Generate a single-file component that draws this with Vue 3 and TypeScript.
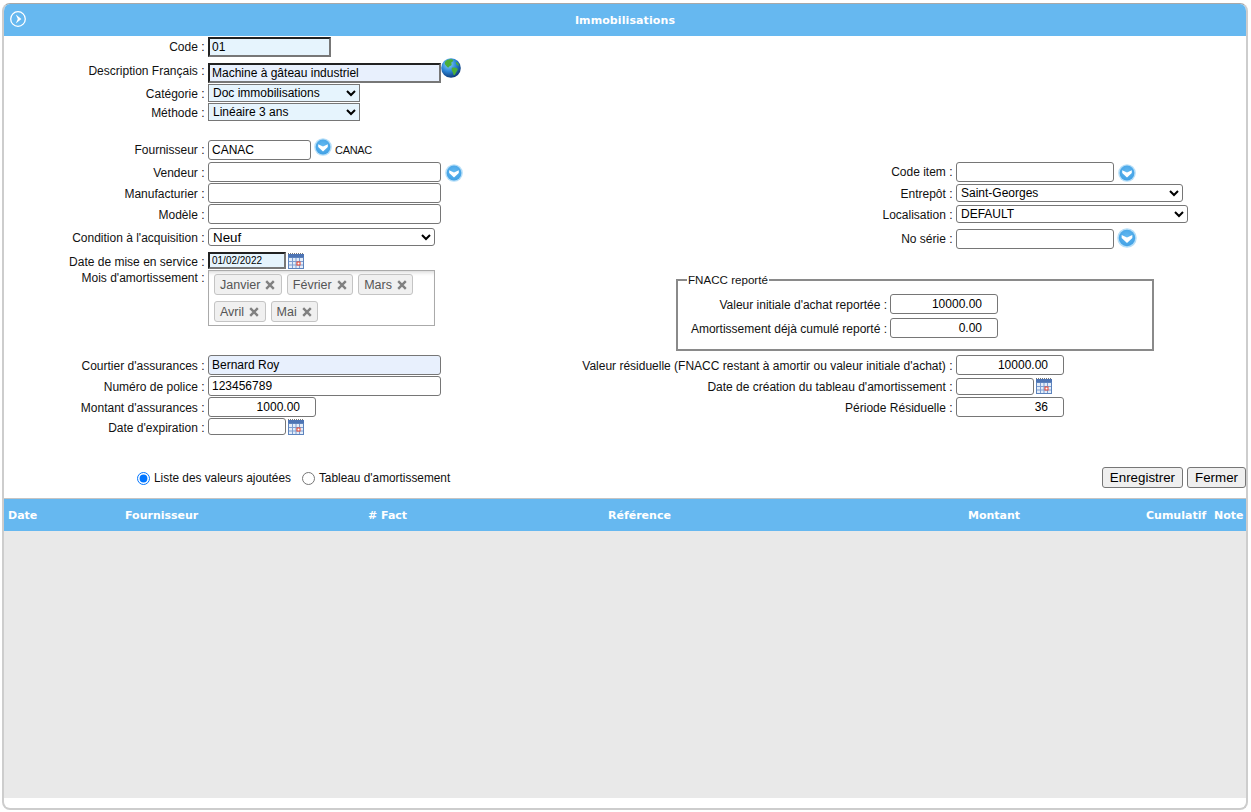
<script setup lang="ts">
const months: string[] = ['Janvier', 'Février', 'Mars', 'Avril', 'Mai']
const columns: string[] = ['Date', 'Fournisseur', '# Fact', 'Référence', 'Montant', 'Cumulatif', 'Note']
</script>

<template>
  <div class="page">
    <svg class="defs" width="0" height="0" aria-hidden="true">
      <defs>
        <radialGradient id="gb" cx="50%" cy="40%" r="65%">
          <stop offset="0" stop-color="#62b8f0" />
          <stop offset="1" stop-color="#3f9fe4" />
        </radialGradient>
        <radialGradient id="gg" cx="38%" cy="30%" r="75%">
          <stop offset="0" stop-color="#8fd4f8" />
          <stop offset="0.5" stop-color="#2c86d8" />
          <stop offset="1" stop-color="#0b3470" />
        </radialGradient>
        <symbol id="drop" viewBox="0 0 18 18">
          <circle cx="9" cy="9" r="8.8" fill="#b5def8" />
          <circle cx="9" cy="9" r="7.4" fill="url(#gb)" />
          <path d="M4.200 6.300 9 8.600l4.800-2.300v2.600L9 13.400 4.200 8.900z" fill="#fff" />
        </symbol>
        <symbol id="cal" viewBox="0 0 16 16">
          <rect x="0" y="1" width="16" height="15" fill="#5d83bd" />
          <path d="M0 .5h16" stroke="#777" stroke-dasharray="1 1" />
          <rect x="0" y="1" width="16" height="3" fill="#4d74b4" />
          <rect x="1" y="5" width="14" height="10" fill="#e4edf9" />
          <path d="M4.500 5v10M8 5v10M11.500 5v10M1 8.500h14M1 12h14" stroke="#7d9fd2" />
          <rect x="9" y="9" width="3" height="3" fill="#fff" stroke="#e8402a" />
        </symbol>
      </defs>
    </svg>

    <div class="frame">
      <header class="title">
        <svg class="title-icon" width="18" height="18" viewBox="0 0 18 18">
          <circle cx="9" cy="9" r="7.300" fill="none" stroke="#fff" stroke-width="1.300" />
          <path d="M6.800 4.600 12.400 9l-5.600 4.400L8.800 9z" fill="#fff" />
        </svg>
        <span>Immobilisations</span>
      </header>

      <div class="form">
        <div class="col left">
          <div class="row r-code">
            <label class="flat">Code :</label>
            <input class="inset tint w123" value="01" />
          </div>
          <div class="row r-desc">
            <label class="up">Description Français :</label>
            <div class="ctl">
              <input class="inset tint2 w233" value="Machine à gâteau industriel" />
              <svg class="globe" width="20" height="20" viewBox="0 0 20 20">
                <circle cx="10" cy="10" r="9.800" fill="url(#gg)" />
                <path d="M4.500 3.200C6.800 1.300 10 .9 12 1.700c.8 1-.4 2-1.500 2.500-.5 1.100.7 1.800-.1 3-.9 1.200-2.300.6-2.600 2-.5 1-1.800-.3-2.500-1.300C3.500 6.500 3.400 4.700 4.500 3.200zM11 9.800c1.800-.7 4-.4 5.400.7.700 1.100-.2 2.600-1.200 3.700-.6 1.400-1.200 2.800-2.300 3-.8-.9-.7-2.300-1.400-3.400-.7-1.200-1.200-2.900-.5-4zM15 3.800c1.300.6 2.600 2 3.200 3.700-1 .4-2.200-.3-2.800-1.200-.5-.8-.8-1.700-.4-2.500z" fill="#4cae38" />
              </svg>
            </div>
          </div>
          <div class="row r-cat">
            <label>Catégorie :</label>
            <select class="sel tint w152"><option>Doc immobilisations</option></select>
          </div>
          <div class="row r-cat">
            <label>Méthode :</label>
            <select class="sel tint w152"><option>Linéaire 3 ans</option></select>
          </div>

          <div class="row r-four">
            <label class="flat">Fournisseur :</label>
            <div class="ctl">
              <input class="plain w103" value="CANAC" />
              <svg class="drop four-drop"><use href="#drop" /></svg>
              <span class="supplier">CANAC</span>
            </div>
          </div>
          <div class="row r-vend">
            <label>Vendeur :</label>
            <div class="ctl">
              <input class="plain w233" />
              <svg class="drop vend-drop"><use href="#drop" /></svg>
            </div>
          </div>
          <div class="row r-one">
            <label>Manufacturier :</label>
            <input class="plain w233" />
          </div>
          <div class="row r-one">
            <label>Modèle :</label>
            <input class="plain w233" />
          </div>
          <div class="row r-cond">
            <label>Condition à l'acquisition :</label>
            <select class="sel round big w227"><option>Neuf</option></select>
          </div>
          <div class="row r-date">
            <label>Date de mise en service :</label>
            <div class="ctl">
              <input class="inset tint small w78" value="01/02/2022" />
              <svg class="cal"><use href="#cal" /></svg>
            </div>
          </div>
          <div class="row r-mois">
            <label class="top">Mois d'amortissement :</label>
            <div class="chips">
              <span v-for="m in months" :key="m" class="chip">
                {{ m }}
                <svg class="x" width="10" height="10" viewBox="0 0 10 10">
                  <path d="M1.200 1.200l7.600 7.600M8.800 1.200 1.200 8.800" stroke="#808080" stroke-width="2.400" />
                </svg>
              </span>
            </div>
          </div>

          <div class="row r-court">
            <label>Courtier d'assurances :</label>
            <input class="plain tint2 w233" value="Bernard Roy" />
          </div>
          <div class="row r-one">
            <label>Numéro de police :</label>
            <input class="plain w233" value="123456789" />
          </div>
          <div class="row r-one">
            <label>Montant d'assurances :</label>
            <input class="plain num w108" value="1000.00" />
          </div>
          <div class="row r-exp">
            <label>Date d'expiration :</label>
            <div class="ctl">
              <input class="plain short w78" />
              <svg class="cal"><use href="#cal" /></svg>
            </div>
          </div>
        </div>

        <div class="col right">
          <div class="row wide r-item">
            <label class="flat">Code item :</label>
            <div class="ctl">
              <input class="plain w158" />
              <svg class="drop item-drop"><use href="#drop" /></svg>
            </div>
          </div>
          <div class="row wide r-ent">
            <label>Entrepôt :</label>
            <select class="sel round w227"><option>Saint-Georges</option></select>
          </div>
          <div class="row wide r-loc">
            <label>Localisation :</label>
            <select class="sel round w232"><option>DEFAULT</option></select>
          </div>
          <div class="row wide r-serie">
            <label class="flat">No série :</label>
            <div class="ctl">
              <input class="plain w158" />
              <svg class="drop serie-drop"><use href="#drop" /></svg>
            </div>
          </div>

          <fieldset class="fnacc">
            <legend>FNACC reporté</legend>
            <div class="f-row">
              <label>Valeur initiale d'achat reportée :</label>
              <input class="plain num w108" value="10000.00" />
            </div>
            <div class="f-row f-second">
              <label>Amortissement déjà cumulé reporté :</label>
              <input class="plain num w108" value="0.00" />
            </div>
          </fieldset>

          <div class="row wide r-res">
            <label>Valeur résiduelle (FNACC restant à amortir ou valeur initiale d'achat) :</label>
            <input class="plain num w108" value="10000.00" />
          </div>
          <div class="row wide r-crea">
            <label>Date de création du tableau d'amortissement :</label>
            <div class="ctl">
              <input class="plain short w78" />
              <svg class="cal"><use href="#cal" /></svg>
            </div>
          </div>
          <div class="row wide r-per">
            <label>Période Résiduelle :</label>
            <input class="plain num w108" value="36" />
          </div>
        </div>
      </div>

      <div class="actions">
        <div class="radios">
          <label class="radio"><input type="radio" name="view" checked />Liste des valeurs ajoutées</label>
          <label class="radio"><input type="radio" name="view" />Tableau d'amortissement</label>
        </div>
        <div class="buttons">
          <button type="button">Enregistrer</button>
          <button type="button">Fermer</button>
        </div>
      </div>

      <div class="thead">
        <span v-for="c in columns" :key="c">{{ c }}</span>
      </div>
      <div class="tbody"></div>
    </div>
  </div>
</template>

<style>
html, body { margin: 0; background: #fff; }
</style>

<style scoped>
.page {
  height: 812px;
  box-sizing: border-box;
  padding: 3px 3px 2px 2px;
  font: 12px "Liberation Sans", Arial, sans-serif;
  color: #111;
  overflow: hidden;
}
.defs { position: absolute; }
.frame {
  height: 100%;
  box-sizing: border-box;
  border: 2px solid #cdcdcd;
  border-top: 1px solid #a8a8a8;
  border-radius: 8px;
  display: flex;
  flex-direction: column;
  overflow: hidden;
}
.title {
  height: 32px;
  margin: 0 -1px;
  background: #66b8f0;
  color: #fff;
  font: bold 11px "DejaVu Sans", Verdana, sans-serif;
  letter-spacing: 0.1px;
  display: flex;
  align-items: center;
  justify-content: center;
  position: relative;
  flex: none;
}
.title-icon { position: absolute; left: 5.5px; top: 5.5px; }
.form { display: flex; flex: none; height: 431px; }
.col { display: flex; flex-direction: column; }
.left { width: 466px; padding-top: 1px; }
.right { padding-top: 126px; }
.row {
  display: grid;
  grid-template-columns: 200.5px auto;
  column-gap: 3.5px;
  align-items: center;
  justify-content: start;
}
.row.wide { grid-template-columns: 482.5px auto; }
label { text-align: right; white-space: nowrap; position: relative; top: 1px; }
label.flat { top: 0; }
label.up { top: -2px; }
label.top { align-self: start; margin-top: 1px; top: 0; }
.ctl { display: flex; align-items: center; position: relative; }

.plain, .inset, .sel {
  box-sizing: border-box;
  margin: 0;
  font: 12px "Liberation Sans", Arial, sans-serif;
  color: #000;
  outline: none;
}
.plain { height: 20px; border: 1px solid #767676; border-radius: 3px; padding: 1px 3px; background: #fff; }
.inset { height: 20px; border: 2px solid; border-color: #222 #777 #777 #222; padding: 1px 2px; }
.tint { background: #e6f4fd; }
.tint2 { background: #e8f0fd; }
.sel { height: 18px; border: 1px solid #767676; border-radius: 0; padding: 0; }
.round { border-radius: 3px; background: #fff; }
.big { font-size: 13.33px; }
.small { height: 17px; font-size: 10px; padding: 0 2px; }
.short { height: 17px; }
.num { text-align: right; padding-right: 15px; }
.w78 { width: 78px; }
.w103 { width: 103px; }
.w108 { width: 108px; }
.w123 { width: 123px; }
.w152 { width: 152px; }
.w158 { width: 158px; }
.w227 { width: 227px; }
.w232 { width: 232px; }
.w233 { width: 233px; }

.r-code { height: 20px; }
.r-desc { height: 20px; margin-top: 6px; }
.r-cat { height: 18px; margin-top: 1px; }
.r-four { height: 20px; margin-top: 19px; }
.r-vend { height: 20px; margin-top: 2px; }
.r-one { height: 20px; margin-top: 1px; }
.r-cond { height: 18px; margin-top: 4px; }
.r-date { height: 17px; margin-top: 6px; }
.r-mois { margin-top: 1px; }
.r-court { height: 20px; margin-top: 29px; }
.r-exp { height: 17px; margin-top: 1px; }

.r-item { height: 20px; }
.r-ent { height: 18px; margin-top: 2px; }
.r-loc { height: 18px; margin-top: 3px; }
.r-serie { height: 20px; margin-top: 6px; }
.r-res { height: 20px; margin-top: 4px; }
.r-crea { height: 18px; margin-top: 2px; }
.r-per { height: 20px; margin-top: 2px; }

.drop { display: block; flex: none; width: 18px; height: 18px; }
.four-drop { margin: -6px 0 0 2.5px; }
.supplier { margin-left: 3.5px; font-size: 11px; letter-spacing: -0.3px; }
.vend-drop { margin: 2px 0 0 4px; }
.item-drop { margin: 2px 0 0 4px; }
.serie-drop { width: 20px; height: 20px; margin: -3px 0 0 3px; }
.globe { position: absolute; left: 233px; top: -5px; }
.cal { display: block; width: 16px; height: 16px; margin-left: 2px; }

.chips {
  box-sizing: border-box;
  width: 227px;
  height: 56px;
  border: 1px solid #aaa;
  padding: 3px 5px;
  display: flex;
  flex-wrap: wrap;
  align-content: flex-start;
  gap: 6px 5px;
  box-shadow: inset 0 4px 4px -3px #d0d0d0;
}
.chip {
  box-sizing: border-box;
  height: 21px;
  border: 1px solid #c4c4c4;
  border-radius: 3px;
  background: #f0f0f0;
  color: #555;
  padding: 0 5.5px 0 5px;
  display: flex;
  align-items: center;
  font-size: 12.5px;
}
.x { margin-left: 5px; flex: none; }

.fnacc {
  box-sizing: border-box;
  width: 478px;
  height: 78px;
  margin: 24px 0 0 206px;
  padding: 0;
  border: 2px solid #8a8a8a;
}
.fnacc legend { padding: 0 1px; margin-left: 9px; font-size: 11.6px; line-height: 14px; }
.f-row {
  display: grid;
  grid-template-columns: 209px auto;
  column-gap: 3px;
  align-items: center;
  justify-content: start;
  height: 20px;
  margin-top: 7px;
}
.f-second { margin-top: 4px; }

.actions {
  flex: none;
  height: 31px;
  display: flex;
  justify-content: space-between;
  align-items: flex-start;
}
.radios { display: flex; padding: 4px 0 0 133px; gap: 11px; align-items: center; font-size: 11.85px; }
.radio { display: flex; align-items: center; top: 0; }
.radio input { margin: 0 4px 0 0; width: 13px; height: 13px; }
.buttons { display: flex; gap: 4px; }
button {
  height: 21px;
  padding: 0 7px;
  border: 1px solid #767676;
  border-radius: 3px;
  background: #efefef;
  color: #000;
  font: 13.33px "Liberation Sans", Arial, sans-serif;
}
.thead {
  flex: none;
  height: 33px;
  box-sizing: border-box;
  border-top: 1px solid #c4c4c4;
  background: #66b8f0;
  color: #fff;
  font: bold 11px "DejaVu Sans", Verdana, sans-serif;
  display: grid;
  grid-template-columns: 117px 243px 240px 360px 178px 68px auto;
  padding-left: 4px;
  align-items: center;
}
.tbody { flex: 1; background: #e9e9e9; margin-bottom: 10px; }
</style>
